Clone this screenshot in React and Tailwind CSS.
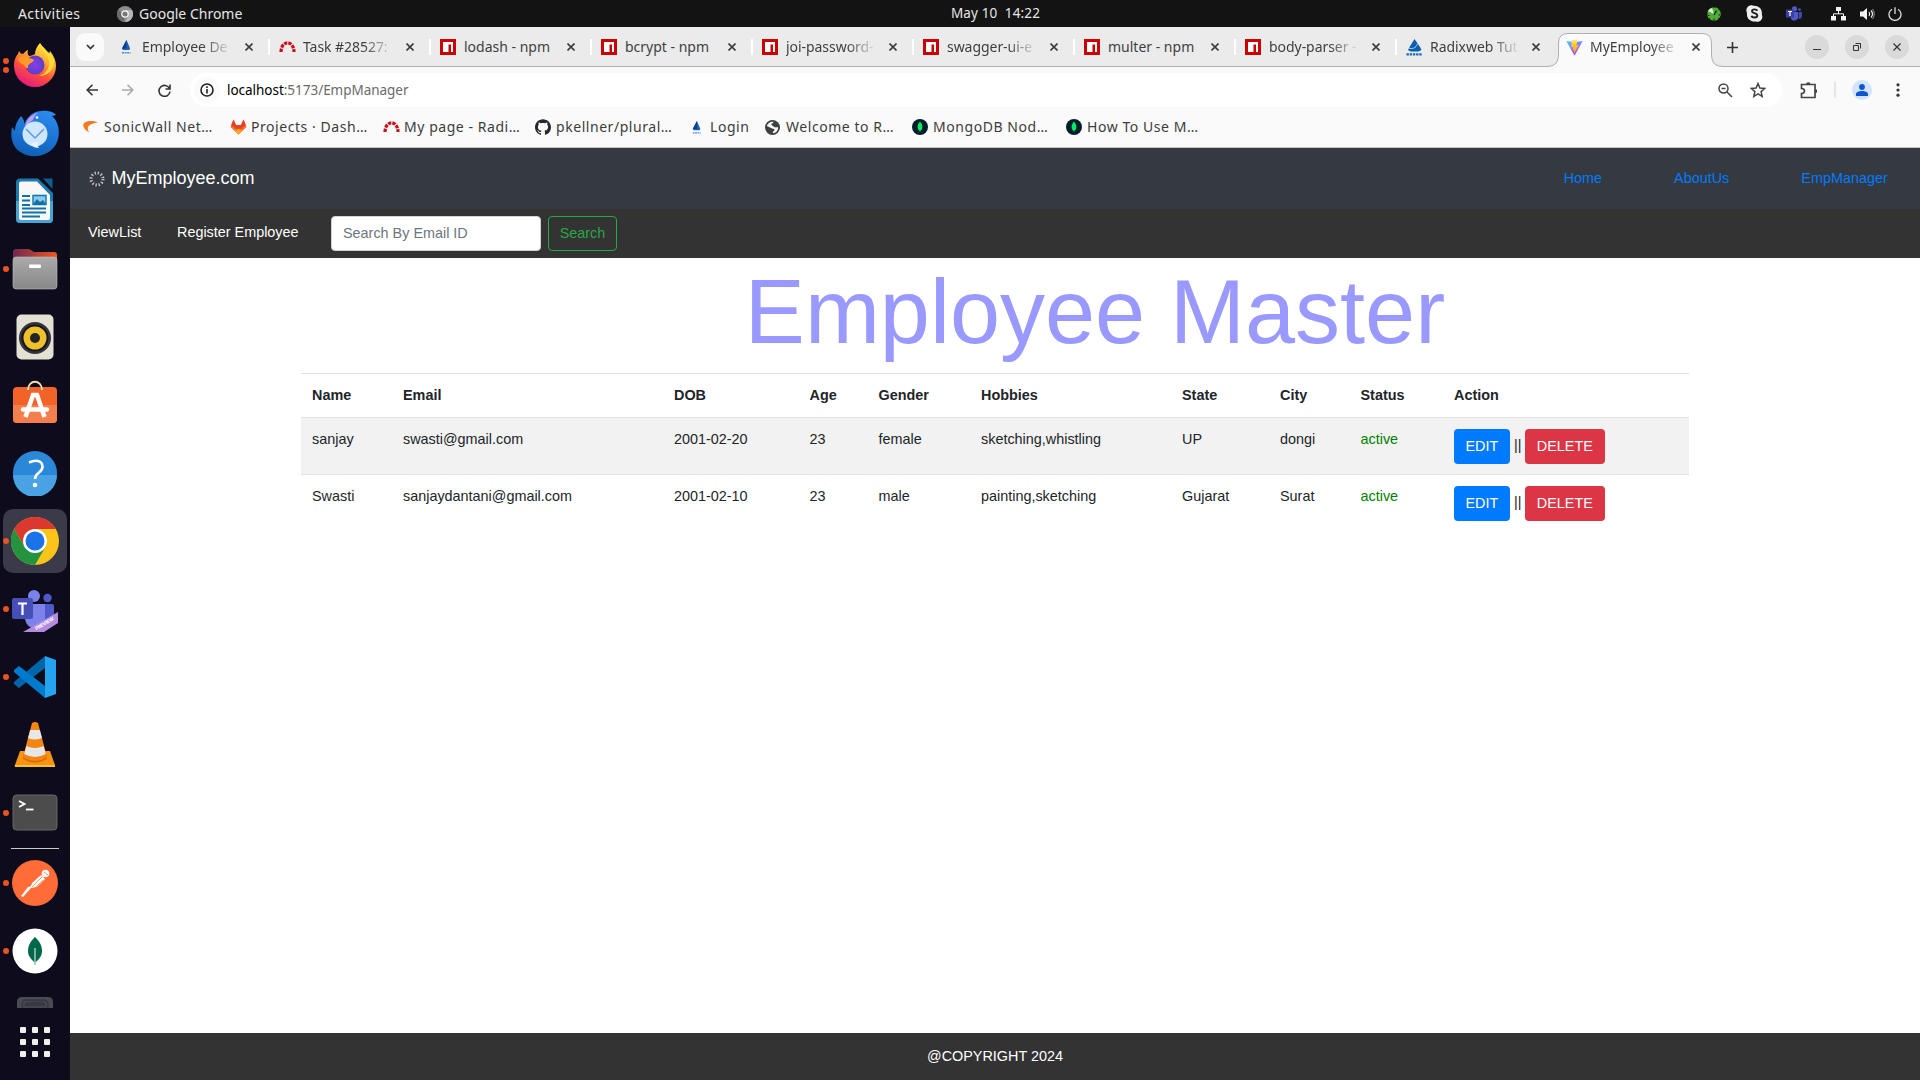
import React from "react";
import { SiGithub } from "react-icons/si";

const ui = "font-['Noto_Sans',sans-serif]";

function NpmIcon() {
  return (
    <svg width="16" height="16" viewBox="0 0 16 16">
      <path fill="#cb0000" d="M0 0h16v16H0z" />
      <path fill="#fff" d="M3 3h10v10h-2V5.500H8.500V13H3z" />
    </svg>
  );
}
function GitlabIcon() {
  return (
    <svg width="17" height="16" viewBox="0 0 17 16">
      <path fill="#fc6d26" d="M3.500.5L6 6h5L13.500.5 16.500 8 8.500 15.500.5 8z" />
      <path fill="#e24329" d="M3.500.5L6 6h5L13.500.5l2.300 5.700L8.500 11.500 1.200 6.200z" />
      <path fill="#fca326" d="M8.500 15.500l-3.700-3.500L8.500 9.500l3.700 2.500z" />
    </svg>
  );
}
function SailIcon({ s = 16 }) {
  return (
    <svg width={s} height={s} viewBox="0 0 16 16">
      <path fill="#1c62bd" d="M8.500 1l3.600 8.500-1 1.500H5L4 9.500z" />
      <path fill="#0c3f86" d="M8.500 1v8.500H4z" />
      <path stroke="#4f88cf" strokeWidth="1.500" strokeDasharray="2 .6" d="M4 13.700h8.500" />
    </svg>
  );
}
function RadixIcon() {
  return (
    <svg width="17" height="17" viewBox="0 0 17 17">
      <path fill="#0b5fae" d="M8.500 0l5.500 8 1.500 3-3 1.500H4.500L2 11l1.500-3z" />
      <path stroke="#fff" strokeWidth=".7" fill="none" d="M3 9c3 1.500 7 0 8.500-4" />
      <path stroke="#1d6cb5" strokeWidth="2.200" strokeDasharray="2.400 .8" d="M.5 15.300h16" />
    </svg>
  );
}
function RedmineIcon() {
  return (
    <svg width="17" height="16" viewBox="0 0 17 16">
      <path d="M2 13C2.200 .8 14.800 .8 15 13" fill="none" stroke="#c4131c" strokeWidth="3.200" strokeDasharray="3.400 1" />
    </svg>
  );
}
function ViteIcon() {
  return (
    <svg width="17" height="17" viewBox="0 0 17 17">
      <defs>
        <linearGradient id="vA" x1="0" y1="0" x2=".6" y2="1"><stop stopColor="#41d1ff" /><stop offset="1" stopColor="#bd34fe" /></linearGradient>
        <linearGradient id="vB" x1="0" y1="0" x2="0" y2="1"><stop stopColor="#ffea83" /><stop offset=".4" stopColor="#ffc52a" /><stop offset="1" stopColor="#ffa800" /></linearGradient>
      </defs>
      <path fill="url(#vA)" d="M.3 2L8.500 3.300 16.700 2 8.500 16.700z" />
      <path fill="url(#vB)" d="M11.500.3L5.700 1.300 5.300 8.500l2.200-.4-.6 3.200 1.500-.4-.8 4.300L12.800 6l-2.300.4z" />
    </svg>
  );
}
function SonicIcon() {
  return (
    <svg width="15" height="14" viewBox="0 0 15 14">
      <path fill="#f47b20" d="M15 2.500C9 0 1 .8.300 4.800 0 8 3 11 6.500 12.500 3.800 9 3 4 15 2.500z" />
    </svg>
  );
}
function GlobeIcon() {
  return (
    <svg width="15" height="15" viewBox="0 0 16 16">
      <circle cx="8" cy="8" r="8" fill="#3c4043" />
      <path fill="#fafafa" d="M9 1.800c-.2 1.800-1.500 1.600-2.200 2.300-.6.800.2 1.700 1.300 1.900 1.500.3 1.200 1.700 2.600 1.700H14c.2 3.500-2.500 6.300-5.600 6.300v-1.700c1.500-.3 2-1.300 1.600-2.300-.6-1.100-2-.7-3-1.300L2 6.300C2.800 3.500 5.800 1.400 9 1.800z" />
      <path fill="#3c4043" d="M8.500 4.300h4l1 3H10L8.500 6z" />
    </svg>
  );
}
function MongoIcon() {
  return (
    <svg width="16" height="16" viewBox="0 0 16 16">
      <circle cx="8" cy="8" r="8" fill="#001e2b" />
      <path fill="#00ed64" d="M8 2.500c1.200 1.700 2.400 3 2.400 5.300 0 2.200-1 3.500-2.100 4.300L8 13.500l-.3-1.400C6.600 11.300 5.600 10 5.600 7.800c0-2.300 1.200-3.600 2.400-5.300z" />
    </svg>
  );
}

const tabs = [
  ["Employee De", <SailIcon />, true],
  ["Task #28527:", <RedmineIcon />, true],
  ["lodash - npm", <NpmIcon />],
  ["bcrypt - npm", <NpmIcon />],
  ["joi-password-", <NpmIcon />, true],
  ["swagger-ui-e", <NpmIcon />, true],
  ["multer - npm", <NpmIcon />],
  ["body-parser -", <NpmIcon />, true],
  ["Radixweb Tut", <RadixIcon />, true],
];

const bookmarks = [
  ["SonicWall Net…", <SonicIcon />, "w-[147px]"],
  ["Projects · Dash…", <GitlabIcon />, "w-[153px]"],
  ["My page - Radi…", <RedmineIcon />, "w-[152px]"],
  ["pkellner/plural…", <SiGithub size={16} color="#24292f" />, "w-[154px]"],
  ["Login", <SailIcon s={15} />, "w-[76px]"],
  ["Welcome to R…", <GlobeIcon />, "w-[147px]"],
  ["MongoDB Nod…", <MongoIcon />, "w-[154px]"],
  ["How To Use M…", <MongoIcon />, "w-[154px]"],
];

function CloseX({ s = 8 }) {
  return (
    <svg width={s} height={s} viewBox="0 0 8 8" className="shrink-0">
      <path d="M.5.5l7 7m0-7l-7 7" stroke="#3c3c3c" strokeWidth="1.600" />
    </svg>
  );
}

function TabText({ children, fade }) {
  return (
    <span className={"-mt-[2px] w-[92px] shrink-0 whitespace-nowrap text-[14px] text-[#3f3f3f] " + (fade ? "tracking-[-0.050px] [mask-image:linear-gradient(to_right,#000_66%,transparent_98%)]" : "")}>
      {children}
    </span>
  );
}

function TopBar() {
  return (
    <div className="grid h-[27px] shrink-0 grid-cols-3 items-center bg-[#131313] text-[14px] text-[#e6e6e6]">
      <div className="flex items-center pl-[18px]">
        <span className="w-[99px] tracking-[0.400px]">Activities</span>
        <svg width="16" height="16" viewBox="0 0 16 16" className="mr-[6px]">
          <circle cx="8" cy="8" r="8" fill="#8c8c8c" />
          <path d="M8 8L1 4a8 8 0 0 0 6 12z" fill="#6a6a6a" />
          <path d="M8 4h7a8 8 0 0 1-7 12l4-7z" fill="#b5b5b5" />
          <circle cx="8" cy="8" r="3.200" fill="#777" stroke="#fff" strokeWidth="1.200" />
        </svg>
        <span>Google Chrome</span>
      </div>
      <div className="whitespace-pre pl-[71px] text-center text-[13.500px] tracking-[0.150px]">May 10  14:22</div>
      <div className="flex items-center justify-end pr-[18px]">
        <svg width="14" height="14" viewBox="0 0 14 14" className="mr-[25px]">
          <circle cx="7" cy="7" r="6" fill="#4fae35" stroke="#4fae35" strokeWidth="1.600" strokeDasharray="4 .7" />
          <path d="M1 4a6 6 0 0 1 4-3l2 6z" fill="#dfe8dc" /><path d="M7 8l2.500-4.500" stroke="#123" strokeWidth="1.500" /><path d="M7 13v-1.500M1 8.500h1.500M11.500 8H13" stroke="#123" />
        </svg>
        <svg width="17" height="17" viewBox="0 0 17 17" className="mr-[23px]">
          <path fill="#eee" d="M5 .2c1.300 0 2.200.5 3 .6 5 0 8.600 3.700 7.800 8.700 2 4-1.800 8.500-6 7C4 17 .3 13 1 8-.8 4.500 1.500.3 5 .2z" />
          <path d="M11.300 5.800C10.800 4 6 3.700 6 6.200c0 2.400 5.300 1.400 5.300 4.300 0 2.800-5.300 2.600-5.800.300" fill="none" stroke="#222" strokeWidth="1.900" />
        </svg>
        <svg width="16" height="16" viewBox="0 0 16 16" className="mr-[29px]">
          <circle cx="8.500" cy="2.800" r="2.600" fill="#5059c9" /><circle cx="13.500" cy="3.500" r="1.600" fill="#4048a8" />
          <path fill="#5059c9" d="M5 6h7v6a4 4 0 0 1-7 1z" /><path fill="#4048a8" d="M12.500 6H16v4a3 3 0 0 1-3.500 3z" />
          <path fill="#3940a0" d="M0 3.500h8v8H0z" /><path d="M2 5.500h4M4 5.500v4.500" stroke="#fff" strokeWidth="1.200" />
        </svg>
        <svg width="15" height="14" viewBox="0 0 15 14" className="mr-[14px]">
          <path fill="#f2f2f2" d="M5 0h5v4H5zM0 9h5v4.500H0zM10 9h5v4.500h-5z" /><path fill="none" stroke="#f2f2f2" d="M7.500 4v3M2.500 9V6.800h10V9" />
        </svg>
        <svg width="15" height="14" viewBox="0 0 15 14" className="mr-[13px]">
          <path fill="#f2f2f2" d="M0 4.500h3L7 1v12L3 9.500H0z" /><path d="M9 5q1.500 2 0 4M11 3.500q3 3.500 0 7" fill="none" stroke="#f2f2f2" strokeWidth="1.200" /><path d="M12.500 2q3.500 5 0 10" fill="none" stroke="#999" />
        </svg>
        <svg width="14" height="14" viewBox="0 0 14 14">
          <path d="M4 2.200a6 6 0 1 0 6 0M7 .2V7" fill="none" stroke="#e0e0e0" strokeWidth="1.300" />
        </svg>
      </div>
    </div>
  );
}

function Slot({ dots = 0, active, children }) {
  return (
    <div className="flex h-[68px] w-full items-center">
      <div className="flex w-[9px] shrink-0 flex-col items-end gap-[3px]">
        {Array.from({ length: dots }).map((_, i) => <i key={i} className="relative z-10 block size-[6px] rounded-full bg-[#e95420]" />)}
      </div>
      <div className={"-ml-[6px] flex h-16 w-16 items-center justify-center rounded-[10px] " + (active ? "bg-[#3b3a48]" : "")}>
        {children}
      </div>
    </div>
  );
}

function Dock() {
  return (
    <aside className="flex w-[70px] shrink-0 flex-col bg-[#0e0c1c] pt-[4px]">
      <Slot dots={2}>
        <svg width="48" height="48" viewBox="0 0 48 48">
          <defs>
            <linearGradient id="ff" x1=".8" y1="0" x2=".3" y2="1"><stop stopColor="#fff44f" /><stop offset=".35" stopColor="#ffb02e" /><stop offset=".65" stopColor="#ff4f3b" /><stop offset="1" stopColor="#e31587" /></linearGradient>
            <radialGradient id="fp"><stop stopColor="#8a3cf0" /><stop offset="1" stopColor="#5a3fc4" /></radialGradient>
          </defs>
          <path fill="url(#ff)" d="M29 2c1 2 4 5 6 7 1 2 2 4 3 4l1-3c4 5 6 10 6 15a21 21 0 0 1-42 0c0-6 2-10 4-12l1-3c1 2 2 3 4 3 2-2 4-4 5-4-1 3 0 5 1 6 2 0 4-1 6-2 0-4 2-8 5-11z" />
          <circle cx="24" cy="24" r="9.500" fill="url(#fp)" />
          <path fill="#ff9a2a" d="M7 18c3-3 8-3 11-1 2 1 5 1 5 2-1 3-5 3-6 6 1 4-3 2-4-1-3-1-5-3-6-6z" />
          <path fill="#ffdf3d" opacity=".85" d="M29 2c0 8 8 10 9 18 1 8-4 13-10 15 9 0 16-7 15-16-1-7-9-8-14-17z" />
        </svg>
      </Slot>
      <Slot>
        <svg width="50" height="50" viewBox="0 0 50 50" className="mt-[2px]">
          <defs><linearGradient id="tb" x1=".7" y1="0" x2=".4" y2="1"><stop stopColor="#2a8bee" /><stop offset="1" stopColor="#0f5fb8" /></linearGradient></defs>
          <path fill="url(#tb)" d="M22 5C29 0 43 1 46 6l-4 1c8 7 8 19 5 26-5 13-23 18-35 11C2 39 0 28 2 18l3 4C5 15 8 11 11 7c4 4 4 9 2 14 1-8 4-12 9-16z" />
          <path fill="#c39af4" d="M28 4c-7 1-12 7-13 14 2-3 5-5 8-7 1-3 2-5 5-7z" />
          <circle cx="25" cy="25" r="12.500" fill="#cfe7fd" />
          <path d="M16 20l9 9 9-9" fill="none" stroke="#5b9be0" strokeWidth="1.500" />
          <path fill="#e9f4ff" d="M20 35c3 3 6 4 9 4-2-2-2-5 0-7z" />
          <circle cx="27" cy="8.500" r="1.300" fill="#fff" />
        </svg>
      </Slot>
      <Slot>
        <svg width="38" height="46" viewBox="0 0 38 46">
          <path fill="#1b7aac" d="M4 .5h18L37 15v26a4 4 0 0 1-4 4H4a4 4 0 0 1-4-4V4A4 4 0 0 1 4 .5z" />
          <path fill="#44a5d6" d="M0 23h37v18a4 4 0 0 1-4 4H4a4 4 0 0 1-4-4z" />
          <path fill="#0f5e8b" d="M27 .5h9.500V11z" />
          <path fill="#f7f7f7" d="M5 3.500h16L34 17v23a2 2 0 0 1-2 2H5a2 2 0 0 1-2-2V5.500a2 2 0 0 1 2-2z" />
          <path d="M6 18h8M6 22.500h8M6 27h8M6 30.500h24M6 34.500h24M6 38.500h18" stroke="#1272a8" strokeWidth="2" />
          <path fill="#8ccbeb" stroke="#1272a8" strokeWidth="1.400" d="M17 17.500h13v9H17z" /><path fill="#1272a8" d="M17 26l4-5 3 3 3-2 3 4z" />
        </svg>
      </Slot>
      <Slot dots={1}>
        <svg width="46" height="42" viewBox="0 0 46 42">
          <defs><linearGradient id="fd"><stop stopColor="#70284f" /><stop offset="1" stopColor="#ee5722" /></linearGradient><linearGradient id="fg" x2="0" y2="1"><stop stopColor="#aaa" /><stop offset="1" stopColor="#888" /></linearGradient></defs>
          <path fill="url(#fd)" d="M1 4a3 3 0 0 1 3-3h13l5 3h20a3 3 0 0 1 3 3v8H1z" />
          <rect x="1" y="9" width="44" height="32" rx="3" fill="url(#fg)" stroke="#c0c0c0" strokeWidth=".6" /><rect x="17" y="16.500" width="12" height="3.500" rx="1" fill="#fff" />
        </svg>
      </Slot>
      <Slot>
        <svg width="38" height="46" viewBox="0 0 38 46">
          <rect x=".5" y=".5" width="37" height="45" rx="5" fill="#e4e0d4" /><circle cx="19" cy="24" r="16" fill="#34343b" />
          <circle cx="19" cy="24" r="13.500" fill="#15151b" /><circle cx="19" cy="24" r="11.500" fill="#eec12c" /><circle cx="19" cy="24" r="5" fill="#242424" />
        </svg>
      </Slot>
      <Slot>
        <svg width="46" height="44" viewBox="0 0 46 44" className="-mt-[6px]">
          <rect x="1" y="7" width="44" height="36" rx="4" fill="#f26328" /><path fill="#f57f4c" d="M1 25h44v14a4 4 0 0 1-4 4H5a4 4 0 0 1-4-4z" />
          <path d="M16 10c0-11 14-11 14 0" fill="none" stroke="#efe1b5" strokeWidth="1.800" />
          <path d="M13.500 37l7.500-22h4l7.500 22" fill="none" stroke="#fff" strokeWidth="4.500" /><path d="M11 29.500h24" stroke="#fff" strokeWidth="4.500" strokeLinecap="round" />
        </svg>
      </Slot>
      <Slot>
        <svg width="46" height="46" viewBox="0 0 46 46" className="-mt-px">
          <circle cx="23" cy="23" r="22" fill="#2b87d8" /><path fill="#48a2e4" d="M1 25h44a22 22 0 0 1-44 0z" />
          <path d="M17 12.500q5-2.500 9-1.500 4.500 1 4.500 6 0 3-4 6-3.500 2.500-3.500 6" fill="none" stroke="#fff" strokeWidth="2.600" /><circle cx="23" cy="35" r="2.300" fill="#fff" />
        </svg>
      </Slot>
      <Slot dots={1} active>
        <svg width="48" height="48" viewBox="0 0 48 48">
          <circle cx="24" cy="24" r="24" fill="#fcc31b" />
          <path fill="#dc3830" d="M24 24V12h20.800A24 24 0 0 0 3.200 12l10.400 18z" />
          <path fill="#24933f" d="M24 24L13.600 30 3.200 12A24 24 0 0 0 24 48l10.400-18z" />
          <circle cx="24" cy="24" r="12" fill="#fff" /><circle cx="24" cy="24" r="9.500" fill="#1a73e8" />
        </svg>
      </Slot>
      <Slot dots={1}>
        <svg width="46" height="44" viewBox="0 0 46 44" className="mt-[4px]">
          <circle cx="22" cy="7" r="6" fill="#7b83eb" /><circle cx="35.500" cy="9" r="4.200" fill="#5059c9" />
          <path fill="#5059c9" d="M30 15h10a2 2 0 0 1 2 2v12c0 6-8 9-12 5z" /><path fill="#7b83eb" d="M13 15h20v14c0 14-18 14-20 1z" />
          <rect x="0" y="9" width="21" height="21" rx="2" fill="#464eb8" /><path d="M6 14.500h9M10.500 14.500V26" stroke="#fff" strokeWidth="2.200" />
          <path fill="#b28ae0" d="M11 43L46 23v11L32 43z" />
          <text x="24.500" y="41.500" transform="rotate(-31 24.500 41.500)" fill="#fff" textLength="21" className="font-['Inter',sans-serif] text-[5px] font-bold">PREVIEW</text>
        </svg>
      </Slot>
      <Slot dots={1}>
        <svg width="42" height="42" viewBox="0 0 42 42">
          <path fill="#0065a9" d="M31 0v12L5 32l-5-4v-2z" /><path fill="#007acc" d="M0 14l5-4 26 20v12L0 16z" /><path fill="#25a3f0" d="M31 0l11 4v34l-11 4z" />
        </svg>
      </Slot>
      <Slot>
        <svg width="42" height="46" viewBox="0 0 42 46">
          <path fill="#f79413" d="M6 29h30l5 14q0 2-2 2H2q-2 0-1-2z" /><path fill="#ffc02e" d="M1 43h40v2H1z" />
          <path fill="#d86b08" d="M9 32q12 10 24 0v5q-12 7-24 0z" />
          <path fill="#f58512" d="M18 1q3-2 6 0l9 34q-12 8-24 0z" /><path fill="#e7e7e7" d="M16.200 8h9.600l2.200 8q-7 3-14 0zM12.500 24q8.500 4 17 0l2.300 8q-11 6-21.600 0z" />
        </svg>
      </Slot>
      <Slot dots={1}>
        <svg width="46" height="38" viewBox="0 0 46 38"><rect x="1" y="1" width="44" height="35" rx="3.500" fill="#4c4c4c" stroke="#666" /><path d="M7 7l5.500 3L7 13" fill="none" stroke="#fff" strokeWidth="1.800" /><path d="M14 15.500h7.500" stroke="#fff" strokeWidth="1.800" /></svg>
      </Slot>
      <div className="ml-[11px] mt-px h-px w-12 bg-[#c5cec3]" />
      <Slot dots={1}>
        <svg width="46" height="46" viewBox="0 0 46 46">
          <circle cx="23" cy="23" r="23" fill="#ff6c37" /><circle cx="33.500" cy="13.500" r="3.800" fill="#fff" />
          <path fill="#fff" d="M29 15l4 4-8 8-6 1-8 9-2-1 7-9 3-1 1-3z" /><path d="M20 27l10-10M22 29l9-9" stroke="#ff6c37" strokeWidth=".7" /><path d="M32 12l4 3" stroke="#ff6c37" strokeWidth=".8" />
        </svg>
      </Slot>
      <Slot dots={1}>
        <svg width="46" height="46" viewBox="0 0 46 46"><circle cx="23" cy="23" r="22.500" fill="#fff" /><path fill="#00684a" d="M23 9c4 4 7 8 7 14 0 5-3 8-6 11h-2c-3-3-6-6-6-11 0-6 3-10 7-14z" /><path stroke="#9cc5b6" strokeWidth="1.600" d="M23 20v17" /></svg>
      </Slot>
      <svg width="36" height="11" viewBox="0 0 36 11" className="ml-[17px] mt-[12px] shrink-0"><path fill="#4a4a52" d="M0 11V5q0-5 5-5h26q5 0 5 5v6z" /><path fill="#44444c" stroke="#2f2f37" d="M5 11V6l2-3h22l2 3v5M8 8l2-2h16l2 2z" /></svg>
      <div className="ml-5 mt-[19px] grid w-[30px] grid-cols-3 gap-[6px]">
        {Array.from({ length: 9 }).map((_, i) => <i key={i} className="block size-[6px] rounded-[1px] bg-[#efefec]" />)}
      </div>
    </aside>
  );
}

function WinBtn({ children }) {
  return <div className="flex size-6 items-center justify-center rounded-full bg-[#dadada]">{children}</div>;
}

function TabStrip() {
  return (
    <div className="flex h-[40px] items-start border-b border-[#b0b0b0] bg-[#ebebeb]">
      <div className="ml-[6px] mt-[6px] flex h-7 w-7 items-center justify-center rounded-[9px] bg-[#fafafa]">
        <svg width="9" height="6" viewBox="0 0 9 6"><path d="M1 1l3.500 3.500L8 1" fill="none" stroke="#333" strokeWidth="1.700" /></svg>
      </div>
      <div className="ml-[3px] flex">
        {tabs.map(([t, ic, fade], i) => (
          <div key={t} className="flex h-[40px] w-[161px] shrink-0 items-center pl-[11px]">
            <span className="flex w-6 shrink-0">{ic}</span>
            <TabText fade={fade}>{t}</TabText>
            <span className={i === 8 ? "ml-[10px]" : "ml-[11px]"}><CloseX /></span>
            {i < 8 && <i className="ml-[15px] -mr-[4px] h-4 w-[2px] shrink-0 bg-white" />}
          </div>
        ))}
      </div>
      <div className="relative z-10 -ml-[9px] mt-[6px] h-[34px] w-[176px] shrink-0">
        <svg className="absolute inset-0" width="176" height="34" viewBox="0 0 176 34">
          <path d="M0 33.500Q11.500 33.500 11.500 22V10Q11.500 .5 21 .5H155Q164.500 .5 164.500 10V22Q164.500 33.500 176 33.500V34H0z" fill="#fafafa" />
          <path d="M0 33.500Q11.500 33.500 11.500 22V10Q11.500 .5 21 .5H155Q164.500 .5 164.500 10V22Q164.500 33.500 176 33.500" fill="none" stroke="#b0b0b0" />
        </svg>
        <div className="relative flex h-[28px] items-center pl-[19px]">
          <span className="flex w-6 shrink-0"><ViteIcon /></span>
          <TabText fade>MyEmployee</TabText>
          <span className="ml-[10px]"><CloseX /></span>
        </div>
      </div>
      <svg width="11" height="11" viewBox="0 0 11 11" className="ml-[4px] mt-[15px]"><path d="M5.500 0v11M0 5.500h11" stroke="#333" strokeWidth="1.600" /></svg>
      <div className="ml-auto mr-[11px] mt-[8px] flex gap-4">
        <WinBtn><i className="mt-[5px] h-px w-[8px] bg-[#333]" /></WinBtn>
        <WinBtn><svg width="8" height="8" viewBox="0 0 8 8"><path d="M.5 2.500h5v5h-5zM2.500 .5h5v5" fill="none" stroke="#333" /></svg></WinBtn>
        <WinBtn><svg width="8" height="8" viewBox="0 0 8 8"><path d="M.5.5l7 7m0-7l-7 7" stroke="#333" strokeWidth="1.200" /></svg></WinBtn>
      </div>
    </div>
  );
}

function Toolbar() {
  return (
    <div className="flex h-[46px] items-center bg-[#fafafa]">
      <svg width="12" height="12" viewBox="0 0 12 12" className="ml-4"><path d="M12 6H1.500M6.500.8L1.200 6l5.300 5.200" fill="none" stroke="#333" strokeWidth="1.600" /></svg>
      <svg width="12" height="12" viewBox="0 0 12 12" className="ml-6"><path d="M0 6h10.500M5.500.8L10.800 6l-5.300 5.200" fill="none" stroke="#aaa" strokeWidth="1.600" /></svg>
      <svg width="13" height="13" viewBox="0 0 13 13" className="ml-6"><path d="M11.500 4.500A5.500 5.500 0 1 0 12 7.500M12 .5V5H7.500" fill="none" stroke="#333" strokeWidth="1.600" /></svg>
      <div className="ml-[19px] flex h-[34px] w-[1592px] items-center rounded-full bg-white">
        <div className="ml-[4px] flex size-[26px] items-center justify-center rounded-full bg-[#fafafa]">
          <svg width="14" height="14" viewBox="0 0 14 14"><circle cx="7" cy="7" r="6" fill="none" stroke="#222" strokeWidth="1.600" /><path d="M7 6v4.500M7 3.300v1.600" stroke="#222" strokeWidth="1.600" /></svg>
        </div>
        <span className="ml-[7px] text-[13.500px] tracking-[-0.030px] text-[#6a6a6a]"><span className="text-black">localhost</span>:5173/EmpManager</span>
        <svg width="15" height="15" viewBox="0 0 15 15" className="ml-auto mr-[17px]"><circle cx="5.500" cy="5.500" r="4.500" fill="none" stroke="#444" strokeWidth="1.500" /><path d="M9 9l5 5M3.500 5.500h4" stroke="#444" strokeWidth="1.500" /></svg>
        <svg width="16" height="16" viewBox="0 0 16 16" className="mr-[16px]"><path d="M8 1.500l1.900 4.500 4.900.4-3.700 3.200 1.100 4.800L8 11.900l-4.200 2.500 1.100-4.800L1.200 6.400 6.100 6z" fill="none" stroke="#444" strokeWidth="1.500" /></svg>
      </div>
      <svg width="17" height="17" viewBox="0 0 17 17" className="ml-[18px]"><path d="M1.500 2.500h13.500v13H1.500v-4q3-.3 3-2.500T1.500 6.500z" fill="none" stroke="#444" strokeWidth="1.700" /><path d="M6 2.500a2.300 2.300 0 0 1 4.600 0zM15 7a2.200 2.200 0 0 1 0 4.400z" fill="#444" /></svg>
      <i className="ml-[17px] h-4 w-[2px] bg-[#e6e6e6]" />
      <div className="ml-[16px] flex size-5 items-center justify-center rounded-full bg-[#d3e3fd]"><svg width="12" height="12" viewBox="0 0 12 12"><circle cx="6" cy="3" r="2.900" fill="#0b57d0" /><path d="M0 12v-2c0-4 12-4 12 0v2z" fill="#0b57d0" /></svg></div>
      <svg width="4" height="14" viewBox="0 0 4 14" className="ml-[24px]"><circle cx="2" cy="1.800" r="1.600" fill="#333" /><circle cx="2" cy="7" r="1.600" fill="#333" /><circle cx="2" cy="12.200" r="1.600" fill="#333" /></svg>
    </div>
  );
}

const cols = [
  ["Name", "w-[91px]"], ["Email", "w-[271px]"], ["DOB", "w-[135.500px]"], ["Age", "w-[69px]"], ["Gender", "w-[102.500px]"],
  ["Hobbies", "w-[201px]"], ["State", "w-[98px]"], ["City", "w-[80.500px]"], ["Status", "w-[93.500px]"], ["Action", ""],
];
const rows = [
  ["sanjay", "swasti@gmail.com", "2001-02-20", "23", "female", "sketching,whistling", "UP", "dongi", "active"],
  ["Swasti", "sanjaydantani@gmail.com", "2001-02-10", "23", "male", "painting,sketching", "Gujarat", "Surat", "active"],
];

function Page() {
  return (
    <div className="flex grow flex-col bg-white font-['Liberation_Sans',sans-serif] text-[14.400px] leading-[21.600px] text-[#212529]">
      <nav className="flex h-[61px] items-center bg-[#343a40] text-[#007bff]">
        <svg width="16" height="16" viewBox="0 0 16 16" className="ml-[19px]"><circle cx="8" cy="8" r="6" fill="none" stroke="#c9bfcf" strokeWidth="3" strokeDasharray="1.300 1.841" /></svg>
        <span className="ml-[6.500px] text-[18px] text-white">MyEmployee.com</span>
        <a className="ml-auto">Home</a><a className="ml-[72px]">AboutUs</a><a className="ml-[72px] mr-[32.300px]">EmpManager</a>
      </nav>
      <div className="flex h-[49px] items-center bg-[#333] text-white">
        <a className="ml-[18px] -mt-[2px] w-[89px]">ViewList</a>
        <a className="-mt-[2px] w-[154px]">Register Employee</a>
        <input readOnly placeholder="Search By Email ID" className="h-[35px] w-[210px] rounded-[4px] border border-[#ced4da] bg-white px-[11px] pb-[2px] placeholder:text-[#6c757d]" />
        <button className="ml-[7px] h-[35px] w-[69px] rounded-[4px] border border-[#28a745] text-[#28a745]">Search</button>
      </div>
      <h1 className="h-[115px] pl-[200px] text-center text-[90px] leading-[108px] text-[#9999ff]">Employee Master</h1>
      <table className="ml-[231px] w-[1388px] table-fixed border-collapse text-left">
        <thead>
          <tr className="h-[44px] border-t border-[#dee2e6]">{cols.map(([c, w]) => <th key={c} className={"px-[11px] py-0 font-bold " + w}>{c}</th>)}</tr>
        </thead>
        <tbody>
          {rows.map((r, i) => (
            <tr key={r[0]} className={"h-[57px] border-t border-[#dee2e6] align-top " + (i === 0 ? "bg-[#f2f2f2]" : "")}>
              {r.map((v, j) => <td key={j} className={"px-[11px] pt-[10.800px] " + (j === 8 ? "text-[green]" : "")}>{v}</td>)}
              <td className="px-[10.800px] pt-[10.800px]">
                <div className="flex items-center">
                  <button className="h-[35px] w-[56px] rounded-[4px] bg-[#007bff] text-white">EDIT</button>
                  <span className="-mt-px w-[15px] pl-[1px] text-center">||</span>
                  <button className="h-[35px] w-[80px] rounded-[4px] bg-[#dc3545] text-white">DELETE</button>
                </div>
              </td>
            </tr>
          ))}
        </tbody>
      </table>
      <footer className="mt-auto flex h-[47px] items-center justify-center bg-[#333] text-white">@COPYRIGHT 2024</footer>
    </div>
  );
}

export default function App() {
  return (
    <div className={"flex h-[1080px] w-[1920px] flex-col overflow-hidden " + ui}>
      <TopBar />
      <div className="flex min-h-0 grow">
        <Dock />
        <main className="flex w-[1850px] flex-col">
          <TabStrip />
          <Toolbar />
          <div className="flex h-[35px] shrink-0 items-start border-b border-[#c4c4c4] bg-[#fafafa] pl-[13px] pt-[4px] text-[14px] leading-5 tracking-[0.550px] text-[#3c3c3c]">
            {bookmarks.map(([t, ic, w]) => (
              <div key={t} className={"flex shrink-0 items-center whitespace-nowrap " + w}><span className="flex w-[21px] shrink-0">{ic}</span>{t}</div>
            ))}
          </div>
          <Page />
        </main>
      </div>
    </div>
  );
}
